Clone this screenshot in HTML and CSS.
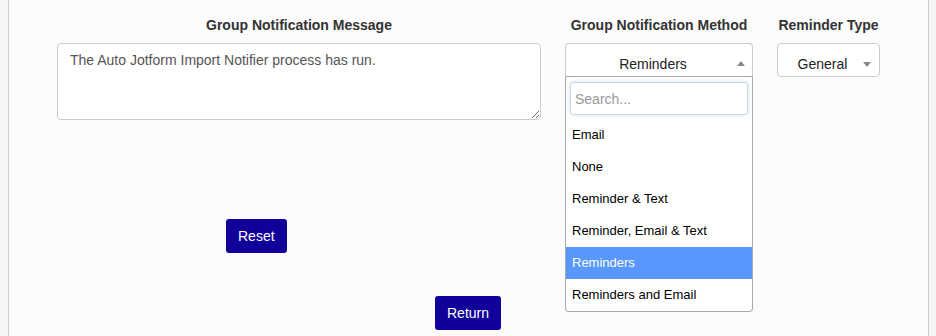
FILE: index.html
```html
<!DOCTYPE html>
<html>
<head>
<meta charset="utf-8">
<link rel="stylesheet" href="styles.css">
</head>
<body>
<div class="panel">
  <div class="fields">
    <div class="col col-msg">
      <div class="label">Group Notification Message</div>
      <textarea class="textarea">The Auto Jotform Import Notifier process has run.</textarea>
    </div>
    <div class="col col-method">
      <div class="label">Group Notification Method</div>
      <div class="select open">
        <span class="select-text">Reminders</span>
        <span class="arrow up"></span>
      </div>
      <div class="dropdown">
        <div class="search-wrap"><input class="search" type="text" placeholder="Search..."></div>
        <ul class="options">
          <li class="option">Email</li>
          <li class="option">None</li>
          <li class="option">Reminder &amp; Text</li>
          <li class="option">Reminder, Email &amp; Text</li>
          <li class="option active">Reminders</li>
          <li class="option">Reminders and Email</li>
        </ul>
      </div>
    </div>
    <div class="col col-type">
      <div class="label">Reminder Type</div>
      <div class="select">
        <span class="select-text">General</span>
        <span class="arrow down"></span>
      </div>
    </div>
  </div>
  <div class="reset-row"><button class="btn">Reset</button></div>
  <div class="return-row"><button class="btn">Return</button></div>
</div>
</body>
</html>
```

FILE: styles.css
```css
* { box-sizing: border-box; }
html, body { margin: 0; padding: 0; }
body {
  background: #f5f5f5;
  font-family: "Liberation Sans", Arial, sans-serif;
  font-size: 14px;
  color: #333;
  height: 336px;
  overflow: hidden;
}
.panel {
  margin-left: 8px;
  width: 921px;
  height: 336px;
  background: #fcfcfc;
  border-left: 1px solid #cfcfcf;
  border-right: 1px solid #cfcfcf;
  padding-top: 15px;
}
.fields {
  display: flex;
  align-items: flex-start;
  padding-left: 48px;
  gap: 24px;
}
.col { position: relative; }
.col-msg { width: 484px; }
.col-method { width: 188px; }
.col-type { width: 103px; }
.label {
  font-weight: bold;
  font-size: 14px;
  line-height: 20px;
  text-align: center;
  margin-bottom: 8px;
  color: #333;
  white-space: nowrap;
}
.textarea {
  display: block;
  width: 484px;
  height: 77px;
  border: 1px solid #ccc;
  border-radius: 4px;
  background: #fff;
  padding: 6px 12px;
  font-family: "Liberation Sans", Arial, sans-serif;
  font-size: 14px;
  line-height: 20px;
  color: #555;
  resize: vertical;
  outline: none;
}
.select {
  position: relative;
  height: 34px;
  border: 1px solid #ccc;
  border-radius: 4px;
  background: #fff;
  padding: 10px 12px 0 0;
  line-height: 20px;
  text-align: center;
  color: #222;
  font-size: 14px;
}
.select.open {
  border-color: #ccc #ccc #aaa #ccc;
  border-radius: 4px 4px 0 0;
}
.arrow {
  position: absolute;
  width: 0;
  height: 0;
  border-left: 4px solid transparent;
  border-right: 4px solid transparent;
}
.arrow.up { border-bottom: 5px solid #888; top: 17px; right: 7px; }
.arrow.down { border-top: 5px solid #888; top: 18px; right: 8px; }
.dropdown {
  position: absolute;
  left: 0;
  top: 62px;
  width: 188px;
  background: #fff;
  border: 1px solid #aaa;
  border-top: none;
  border-radius: 0 0 4px 4px;
  z-index: 5;
}
.search-wrap { padding: 5px 4px 4px 4px; }
.search {
  display: block;
  width: 178px;
  height: 33px;
  border: 1px solid #cfd8e2;
  border-radius: 3px;
  padding: 0 4px;
  font-family: "Liberation Sans", Arial, sans-serif;
  font-size: 14px;
  color: #555;
  box-shadow: 0 0 4px rgba(102, 175, 233, 0.35);
  outline: none;
}
.search::placeholder { color: #999; }
.options { list-style: none; margin: 0; padding: 0; }
.option {
  height: 32px;
  line-height: 32px;
  padding: 0 6px;
  font-size: 13px;
  color: #000;
  white-space: nowrap;
}
.option.active { background: #5897fb; color: #fff; }
.btn {
  background: #11009a;
  color: #fff;
  border: none;
  border-radius: 3px;
  font-family: "Liberation Sans", Arial, sans-serif;
  font-size: 14px;
  line-height: 20px;
  height: 34px;
  padding: 0 12px;
}
.reset-row { padding-left: 217px; margin-top: 99px; }
.return-row { padding-left: 426px; margin-top: 43px; }
```
